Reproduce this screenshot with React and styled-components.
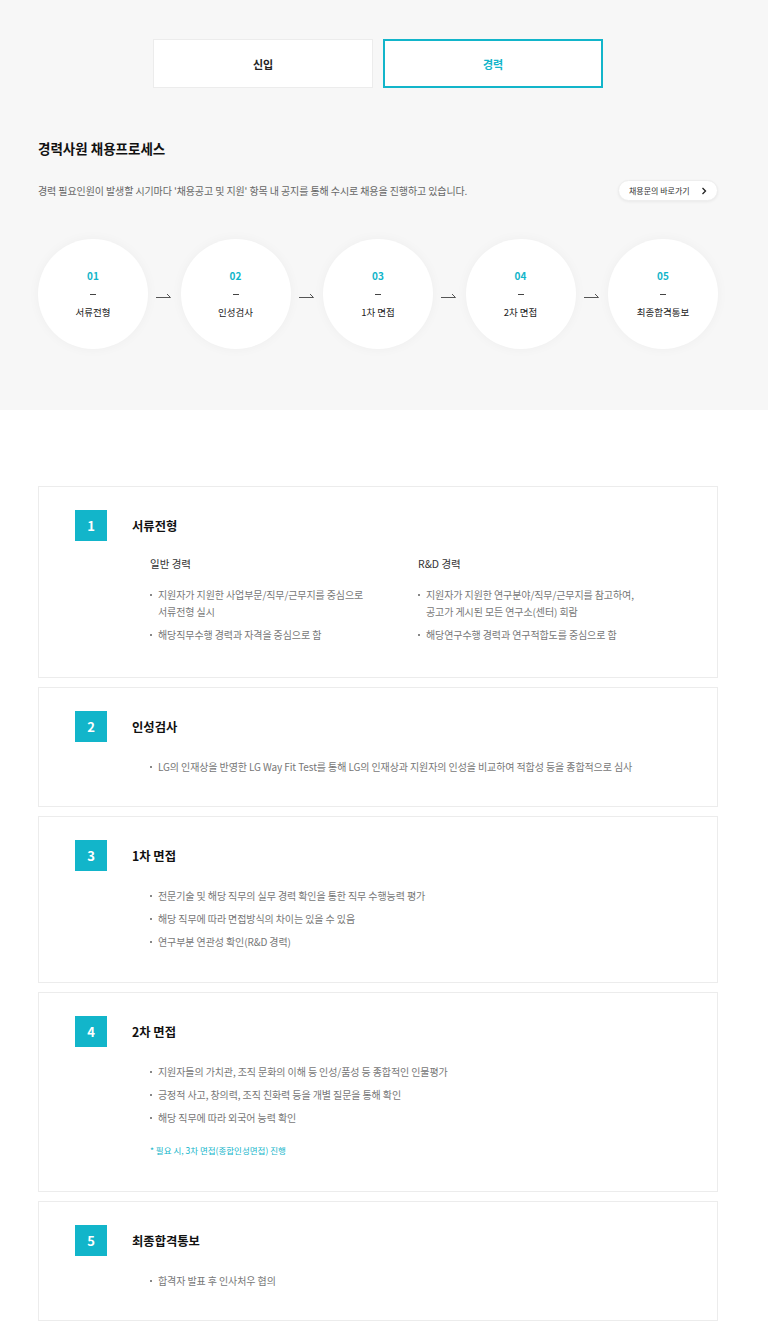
import React, { useState } from "react";
import styled, { createGlobalStyle } from "styled-components";

const accent = "#12b5ca";

const GlobalStyle = createGlobalStyle`
  html, body {
    margin: 0;
    padding: 0;
    background: #fff;
  }
  body {
    font-family: "Noto Sans CJK KR", "Noto Sans", sans-serif;
    color: #222;
    -webkit-font-smoothing: antialiased;
  }
  * {
    box-sizing: border-box;
  }
`;

const TopSection = styled.section`
  background: #f7f7f7;
  padding: 39px 0 61px;
`;

const Inner = styled.div`
  width: 680px;
  margin: 0 50px 0 38px;
`;

const Tabs = styled.div`
  display: flex;
  justify-content: center;
  gap: 10px;
`;

const Tab = styled.button`
  width: 220px;
  height: 49px;
  background: #fff;
  border: ${props => (props.$active ? `2px solid ${accent}` : "1px solid #ececec")};
  color: ${props => (props.$active ? accent : "#222")};
  font-family: inherit;
  font-size: 11px;
  font-weight: 700;
  cursor: pointer;
  padding: 0;
`;

const Title = styled.h2`
  margin: 51px 0 0;
  font-size: 13.5px;
  font-weight: 700;
  line-height: 18px;
  color: #111;
`;

const DescRow = styled.div`
  display: flex;
  align-items: center;
  justify-content: space-between;
  margin-top: 23px;
`;

const Desc = styled.p`
  margin: 0;
  font-size: 10px;
  color: #666;
  letter-spacing: -0.1px;
`;

const LinkButton = styled.a`
  display: flex;
  align-items: center;
  justify-content: space-between;
  width: 100px;
  height: 21px;
  padding: 0 10px 0 10px;
  border-radius: 11px;
  background: #fff;
  border: 1px solid #eee;
  box-shadow: 0 1px 3px rgba(0, 0, 0, 0.06);
  font-size: 8px;
  color: #333;
  text-decoration: none;
  white-space: nowrap;
`;

const Steps = styled.ol`
  display: flex;
  align-items: center;
  justify-content: space-between;
  list-style: none;
  margin: 38px 0 0;
  padding: 0;
`;

const Circle = styled.li`
  width: 110px;
  height: 110px;
  border-radius: 50%;
  background: #fff;
  box-shadow: 0 0 12px rgba(0, 0, 0, 0.04);
  display: flex;
  flex-direction: column;
  align-items: center;
  justify-content: center;
  padding-bottom: 1px;
`;

const StepNum = styled.span`
  font-size: 10px;
  font-weight: 700;
  color: ${accent};
  line-height: 14px;
`;

const StepDash = styled.span`
  width: 6px;
  height: 1px;
  background: #444;
  margin: 11px 0 10px;
`;

const StepLabel = styled.span`
  font-size: 9.5px;
  color: #222;
  line-height: 14px;
`;

const Arrow = styled.li`
  display: flex;
  width: 16px;
  height: 8px;
`;

const Body = styled.section`
  padding: 76px 0 19px;
`;

const CardList = styled.div`
  display: flex;
  flex-direction: column;
  gap: 9px;
`;

const Card = styled.article`
  border: 1px solid #ececec;
  background: #fff;
  padding: 23px 36px ${props => props.$bottom || 31}px;
`;

const CardHead = styled.div`
  display: flex;
  align-items: center;
  gap: 25px;
`;

const Badge = styled.span`
  width: 32px;
  height: 31px;
  background: ${accent};
  color: #fff;
  font-size: 13px;
  font-weight: 700;
  display: flex;
  align-items: center;
  justify-content: center;
`;

const CardTitle = styled.h3`
  margin: 0;
  font-size: 12.3px;
  font-weight: 700;
  color: #111;
`;

const CardBody = styled.div`
  margin: 16px 0 0 75px;
`;

const Columns = styled.div`
  display: grid;
  grid-template-columns: 268px 1fr;
`;

const SubTitle = styled.h4`
  margin: -2px 0 14px;
  font-size: 10.5px;
  font-weight: 400;
  color: #333;
  line-height: 17px;
`;

const List = styled.ul`
  list-style: none;
  margin: 0;
  padding: 0;
  display: flex;
  flex-direction: column;
  gap: 6px;
`;

const Item = styled.li`
  position: relative;
  padding-left: 8px;
  font-size: 10px;
  line-height: 17px;
  color: #777;
  letter-spacing: -0.1px;

  &::before {
    content: "";
    position: absolute;
    left: 0;
    top: 8px;
    width: 2px;
    height: 2px;
    background: #888;
  }
`;

const Note = styled.p`
  margin: 16px 0 0;
  font-size: 8.5px;
  line-height: 17px;
  color: ${accent};
`;

const steps = [
  { num: "01", label: "서류전형" },
  { num: "02", label: "인성검사" },
  { num: "03", label: "1차 면접" },
  { num: "04", label: "2차 면접" },
  { num: "05", label: "최종합격통보" },
];

const HalfArrow = () => (
  <Arrow aria-hidden="true">
    <svg width="16" height="8" viewBox="0 0 16 8">
      <path d="M0 7.5H14.5L11 4" fill="none" stroke="#555" strokeWidth="1" />
    </svg>
  </Arrow>
);

const Chevron = () => (
  <svg width="6" height="8" viewBox="0 0 6 8">
    <path d="M1.5 1l3 3-3 3" fill="none" stroke="#222" strokeWidth="1.3" />
  </svg>
);

const Bullets = ({ items }) => (
  <List>
    {items.map((text, i) => (
      <Item key={i}>{text}</Item>
    ))}
  </List>
);

export default function App() {
  const [tab, setTab] = useState("career");

  return (
    <>
      <GlobalStyle />
      <TopSection>
        <Inner>
          <Tabs>
            <Tab $active={tab === "new"} onClick={() => setTab("new")}>
              신입
            </Tab>
            <Tab $active={tab === "career"} onClick={() => setTab("career")}>
              경력
            </Tab>
          </Tabs>
          <Title>경력사원 채용프로세스</Title>
          <DescRow>
            <Desc>
              경력 필요인원이 발생할 시기마다 '채용공고 및 지원' 항목 내 공지를 통해 수시로 채용을 진행하고 있습니다.
            </Desc>
            <LinkButton href="#">
              채용문의 바로가기
              <Chevron />
            </LinkButton>
          </DescRow>
          <Steps>
            {steps.map((s, i) => (
              <React.Fragment key={s.num}>
                {i > 0 && <HalfArrow />}
                <Circle>
                  <StepNum>{s.num}</StepNum>
                  <StepDash />
                  <StepLabel>{s.label}</StepLabel>
                </Circle>
              </React.Fragment>
            ))}
          </Steps>
        </Inner>
      </TopSection>

      <Body>
        <Inner>
          <CardList>
            <Card $bottom={34}>
              <CardHead>
                <Badge>1</Badge>
                <CardTitle>서류전형</CardTitle>
              </CardHead>
              <CardBody>
                <Columns>
                  <div>
                    <SubTitle>일반 경력</SubTitle>
                    <Bullets
                      items={[
                        <>
                          지원자가 지원한 사업부문/직무/근무지를 중심으로
                          <br />
                          서류전형 실시
                        </>,
                        "해당직무수행 경력과 자격을 중심으로 함",
                      ]}
                    />
                  </div>
                  <div>
                    <SubTitle>R&amp;D 경력</SubTitle>
                    <Bullets
                      items={[
                        <>
                          지원자가 지원한 연구분야/직무/근무지를 참고하여,
                          <br />
                          공고가 게시된 모든 연구소(센터) 회람
                        </>,
                        "해당연구수행 경력과 연구적합도를 중심으로 함",
                      ]}
                    />
                  </div>
                </Columns>
              </CardBody>
            </Card>

            <Card>
              <CardHead>
                <Badge>2</Badge>
                <CardTitle>인성검사</CardTitle>
              </CardHead>
              <CardBody>
                <Bullets
                  items={[
                    "LG의 인재상을 반영한 LG Way Fit Test를 통해 LG의 인재상과 지원자의 인성을 비교하여 적합성 등을 종합적으로 심사",
                  ]}
                />
              </CardBody>
            </Card>

            <Card $bottom={32}>
              <CardHead>
                <Badge>3</Badge>
                <CardTitle>1차 면접</CardTitle>
              </CardHead>
              <CardBody>
                <Bullets
                  items={[
                    "전문기술 및 해당 직무의 실무 경력 확인을 통한 직무 수행능력 평가",
                    "해당 직무에 따라 면접방식의 차이는 있을 수 있음",
                    "연구부분 연관성 확인(R&D 경력)",
                  ]}
                />
              </CardBody>
            </Card>

            <Card $bottom={32}>
              <CardHead>
                <Badge>4</Badge>
                <CardTitle>2차 면접</CardTitle>
              </CardHead>
              <CardBody>
                <Bullets
                  items={[
                    "지원자들의 가치관, 조직 문화의 이해 등 인성/품성 등 종합적인 인물평가",
                    "긍정적 사고, 창의력, 조직 친화력 등을 개별 질문을 통해 확인",
                    "해당 직무에 따라 외국어 능력 확인",
                  ]}
                />
                <Note>* 필요 시, 3차 면접(종합인성면접) 진행</Note>
              </CardBody>
            </Card>

            <Card>
              <CardHead>
                <Badge>5</Badge>
                <CardTitle>최종합격통보</CardTitle>
              </CardHead>
              <CardBody>
                <Bullets items={["합격자 발표 후 인사처우 협의"]} />
              </CardBody>
            </Card>
          </CardList>
        </Inner>
      </Body>
    </>
  );
}
